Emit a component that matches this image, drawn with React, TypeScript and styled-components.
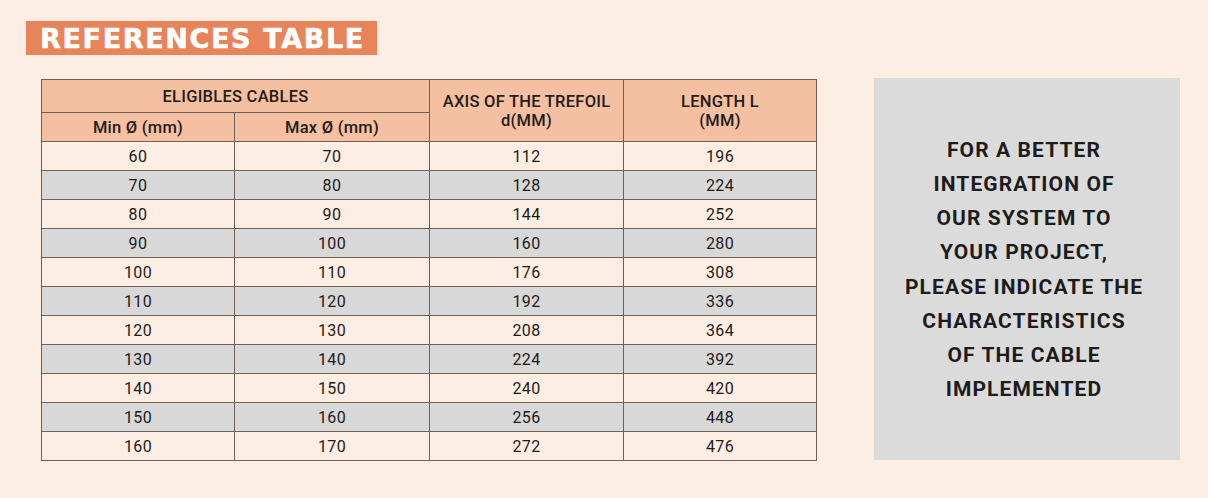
import React from "react";
import styled, { createGlobalStyle } from "styled-components";

const GlobalStyle = createGlobalStyle`
  html, body {
    margin: 0;
    padding: 0;
    background: #fdeee3;
  }
  body {
    font-family: Roboto, "Liberation Sans", sans-serif;
    color: #1e1a18;
  }
`;

const Page = styled.div`
  width: 1208px;
  height: 498px;
  box-sizing: border-box;
  padding: 21px 0 0 26px;
  background: #fdeee3;
`;

const Title = styled.h1`
  display: inline-block;
  margin: 0;
  height: 34px;
  padding: 0 12px 0 14px;
  background: #e8835a;
  color: #ffffff;
  font-family: "DejaVu Sans", Lato, sans-serif;
  font-weight: 700;
  font-size: 27px;
  line-height: 35px;
  letter-spacing: 1.65px;
  -webkit-text-stroke: 0.6px #ffffff;
`;

const Content = styled.div`
  display: flex;
  align-items: flex-start;
  gap: 57px;
  margin-top: 23px;
  padding-left: 15px;
`;

const Table = styled.table`
  border-collapse: collapse;
  table-layout: fixed;
  width: 776px;
  margin-top: 1px;
  border: 1px solid #6e5f57;
`;

const HeadCell = styled.th<{ $h: number }>`
  height: ${(p) => p.$h}px;
  padding: 0;
  border: 1px solid #6e5f57;
  background: #f5bfa2;
  font-weight: 500;
  font-size: 16.5px;
  line-height: 19px;
  letter-spacing: 0.25px;
  text-align: center;
  color: #231c18;
`;

const Row = styled.tr<{ $alt: boolean }>`
  background: ${(p) => (p.$alt ? "#d9d8d8" : "#fdeee3")};
`;

const Cell = styled.td`
  height: 28px;
  padding: 0;
  border: 1px solid #6e5f57;
  font-size: 16px;
  letter-spacing: 0.4px;
  text-align: center;
  color: #1e1a18;
`;

const InfoBox = styled.div`
  width: 306px;
  height: 382px;
  background: #dcdbdb;
  display: flex;
  align-items: center;
  justify-content: center;
`;

const InfoText = styled.p`
  margin: 0 6px 0 0;
  padding-top: 1px;
  font-weight: 700;
  font-size: 21px;
  line-height: 34.2px;
  text-align: center;
  color: #1c1c1c;
  letter-spacing: 1.1px;
`;

const rows = [
  [60, 70, 112, 196],
  [70, 80, 128, 224],
  [80, 90, 144, 252],
  [90, 100, 160, 280],
  [100, 110, 176, 308],
  [110, 120, 192, 336],
  [120, 130, 208, 364],
  [130, 140, 224, 392],
  [140, 150, 240, 420],
  [150, 160, 256, 448],
  [160, 170, 272, 476],
];

const infoLines = [
  "FOR A BETTER",
  "INTEGRATION OF",
  "OUR SYSTEM TO",
  "YOUR PROJECT,",
  "PLEASE INDICATE THE",
  "CHARACTERISTICS",
  "OF THE CABLE",
  "IMPLEMENTED",
];

export default function App() {
  return (
    <Page>
      <GlobalStyle />
      <Title>REFERENCES TABLE</Title>
      <Content>
        <Table>
          <colgroup>
            <col style={{ width: 193 }} />
            <col style={{ width: 195 }} />
            <col style={{ width: 194 }} />
            <col style={{ width: 193 }} />
          </colgroup>
          <thead>
            <tr>
              <HeadCell $h={32} colSpan={2}>
                ELIGIBLES CABLES
              </HeadCell>
              <HeadCell $h={32} rowSpan={2}>
                AXIS OF THE TREFOIL
                <br />
                d(MM)
              </HeadCell>
              <HeadCell $h={32} rowSpan={2}>
                LENGTH L
                <br />
                (MM)
              </HeadCell>
            </tr>
            <tr>
              <HeadCell $h={28}>Min Ø (mm)</HeadCell>
              <HeadCell $h={28}>Max Ø (mm)</HeadCell>
            </tr>
          </thead>
          <tbody>
            {rows.map((r, i) => (
              <Row key={i} $alt={i % 2 === 1}>
                {r.map((v, j) => (
                  <Cell key={j}>{v}</Cell>
                ))}
              </Row>
            ))}
          </tbody>
        </Table>
        <InfoBox>
          <InfoText>
            {infoLines.map((l, i) => (
              <React.Fragment key={i}>
                {l}
                {i < infoLines.length - 1 && <br />}
              </React.Fragment>
            ))}
          </InfoText>
        </InfoBox>
      </Content>
    </Page>
  );
}
